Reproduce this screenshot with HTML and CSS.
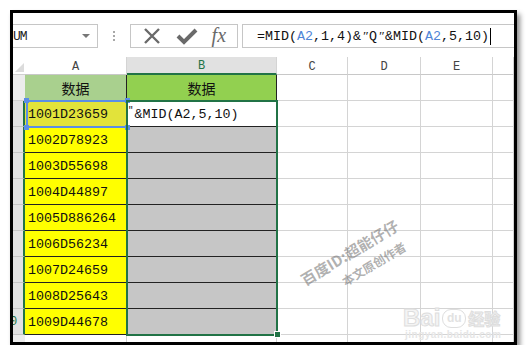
FILE: index.html
```html
<!DOCTYPE html>
<html lang="zh-CN">
<head>
  <meta charset="UTF-8">
  <title>MID 公式</title>
  <link rel="stylesheet" href="styles.css">
</head>
<body>
  <div class="frame">
    <!-- 编辑栏 -->
    <div class="formula-row">
      <div class="name-box">
        <span>UM</span>
        <span class="drop"></span>
      </div>
      <div class="grip"><i></i><i></i><i></i></div>
      <div class="fx-buttons">
        <svg width="20" height="18" viewBox="0 0 20 18"><path d="M3 2 L17 16 M17 2 L3 16" stroke="#6a6a6a" stroke-width="2.4" fill="none"/></svg>
        <svg width="22" height="18" viewBox="0 0 22 18"><path d="M2 9 L8 15 L20 3" stroke="#6a6a6a" stroke-width="4" fill="none"/></svg>
        <span class="fx">fx</span>
      </div>
      <div class="formula-box">=MID(<span class="ref">A2</span>,1,4)&amp;<span class="dq">″</span>Q<span class="dq">″</span>&amp;MID(<span class="ref">A2</span>,5,10)<span class="cursor"></span></div>
    </div>

    <!-- 表格区 -->
    <div class="sheet">
      <div class="row head-row">
        <div class="rh corner"><span class="tri"></span></div>
        <div class="cell ca ch">A</div>
        <div class="cell cb ch sel-col">B</div>
        <div class="cell cc ch">C</div>
        <div class="cell cd ch">D</div>
        <div class="cell ce ch">E</div>
        <div class="cell cf ch"></div>
      </div>
      <div class="row">
        <div class="rh"></div>
        <div class="cell ca title-a">数据</div>
        <div class="cell cb title-b">数据</div>
        <div class="cell cc"></div><div class="cell cd"></div><div class="cell ce"></div><div class="cell cf"></div>
      </div>
      <div class="row">
        <div class="rh sel-row"></div>
        <div class="cell ca data active">1001D23659</div>
        <div class="cell cb edit"><span class="q">″</span>&amp;MID(A2,5,10)</div>
        <div class="cell cc"></div><div class="cell cd"></div><div class="cell ce"></div><div class="cell cf"></div>
      </div>
      <div class="row">
        <div class="rh sel-row"></div>
        <div class="cell ca data">1002D78923</div>
        <div class="cell cb grey"></div>
        <div class="cell cc"></div><div class="cell cd"></div><div class="cell ce"></div><div class="cell cf"></div>
      </div>
      <div class="row">
        <div class="rh sel-row"></div>
        <div class="cell ca data">1003D55698</div>
        <div class="cell cb grey"></div>
        <div class="cell cc"></div><div class="cell cd"></div><div class="cell ce"></div><div class="cell cf"></div>
      </div>
      <div class="row">
        <div class="rh sel-row"></div>
        <div class="cell ca data">1004D44897</div>
        <div class="cell cb grey"></div>
        <div class="cell cc"></div><div class="cell cd"></div><div class="cell ce"></div><div class="cell cf"></div>
      </div>
      <div class="row">
        <div class="rh sel-row"></div>
        <div class="cell ca data">1005D886264</div>
        <div class="cell cb grey"></div>
        <div class="cell cc"></div><div class="cell cd"></div><div class="cell ce"></div><div class="cell cf"></div>
      </div>
      <div class="row">
        <div class="rh sel-row"></div>
        <div class="cell ca data">1006D56234</div>
        <div class="cell cb grey"></div>
        <div class="cell cc"></div><div class="cell cd"></div><div class="cell ce"></div><div class="cell cf"></div>
      </div>
      <div class="row">
        <div class="rh sel-row"></div>
        <div class="cell ca data">1007D24659</div>
        <div class="cell cb grey"></div>
        <div class="cell cc"></div><div class="cell cd"></div><div class="cell ce"></div><div class="cell cf"></div>
      </div>
      <div class="row">
        <div class="rh sel-row"></div>
        <div class="cell ca data">1008D25643</div>
        <div class="cell cb grey"></div>
        <div class="cell cc"></div><div class="cell cd"></div><div class="cell ce"></div><div class="cell cf"></div>
      </div>
      <div class="row">
        <div class="rh sel-row"><span class="num">0</span></div>
        <div class="cell ca data">1009D44678</div>
        <div class="cell cb grey"></div>
        <div class="cell cc"></div><div class="cell cd"></div><div class="cell ce"></div><div class="cell cf"></div>
      </div>
      <div class="row last-row">
        <div class="rh"></div>
        <div class="cell ca"></div><div class="cell cb"></div>
        <div class="cell cc"></div><div class="cell cd"></div><div class="cell ce"></div><div class="cell cf"></div>
      </div>

      <!-- 选区和引用框 -->
      <div class="ref-box">
        <i class="h tl"></i><i class="h tr"></i><i class="h bl"></i><i class="h br"></i>
      </div>
      <div class="selection"></div>
      <div class="fill-handle"></div>

      <!-- 水印 -->
      <div class="watermark">
        <span>百度ID:超能仔仔</span>
        <span class="sub">本文原创作者</span>
      </div>
      <div class="baidu">
        <div class="logo">
          <span class="bai">Bai</span>
          <span class="du">du</span>
          <span class="jy">经验</span>
        </div>
        <div class="url">jingyan.baidu.com</div>
      </div>
    </div>
  </div>
</body>
</html>
```

FILE: styles.css
```css
body {
  margin: 0;
  background: #fff;
  font-family: 'Liberation Mono', 'Noto Sans CJK SC', monospace;
}
.frame {
  margin: 10px 0 0 10px;
  width: 507px;
  height: 335px;
  box-sizing: border-box;
  border: 3px solid #000;
  box-shadow: 3px 4px 5px rgba(0,0,0,0.45);
  overflow: hidden;
  background: #fff;
}

/* 编辑栏 */
.formula-row {
  margin-top: 11px;
  height: 24px;
  display: flex;
  align-items: stretch;
}
.name-box {
  width: 85px;
  box-sizing: border-box;
  border: 1px solid #c6c6c6;
  border-left: none;
  display: flex;
  align-items: center;
  justify-content: space-between;
  padding-right: 7px;
  font-size: 13px;
  color: #222;
  letter-spacing: -1px;
}
.drop {
  width: 0; height: 0;
  border-left: 4px solid transparent;
  border-right: 4px solid transparent;
  border-top: 4px solid #777;
}
.grip {
  width: 32px;
  display: flex;
  flex-direction: column;
  align-items: center;
  justify-content: center;
  gap: 2px;
}
.grip i {
  width: 2px; height: 2px;
  background: #a8a8a8;
}
.fx-buttons {
  width: 108px;
  box-sizing: border-box;
  border: 1px solid #c6c6c6;
  display: flex;
  align-items: center;
  justify-content: space-around;
  padding: 0 4px;
}
.fx {
  font-family: 'Liberation Serif', serif;
  font-style: italic;
  font-size: 20px;
  color: #6a6a6a;
  line-height: 1;
  margin-top: -2px;
}
.formula-box {
  flex: 1;
  margin-left: 4px;
  box-sizing: border-box;
  border: 1px solid #c6c6c6;
  border-right: none;
  display: flex;
  align-items: center;
  padding-left: 14px;
  font-size: 13.33px;
  color: #111;
  white-space: pre;
}
.ref { color: #4f86d6; }
.dq {
  display: inline-block;
  width: 8px;
  font-family: 'Liberation Serif', serif;
  font-style: italic;
  text-align: center;
}
.cursor {
  width: 1px;
  height: 17px;
  background: #000;
  margin-left: 1px;
}

/* 表格 */
.sheet {
  position: relative;
  margin-top: 9px;
}
.row {
  display: flex;
  height: 26px;
}
.head-row { height: 18px; }
.last-row { height: 8px; }
.rh {
  width: 12px;
  box-sizing: border-box;
  background: #ececec;
  border-bottom: 1px solid #d0d0d0;
  overflow: hidden;
  font-size: 12px;
  color: #217346;
}
.rh.sel-row {
  background: #e1e1e1;
  border-right: 2px solid #217346;
  border-bottom-color: #c4c4c4;
}
.num {
  display: block;
  margin-left: -3px;
  margin-top: 6px;
}
.corner {
  background: #fff;
  border-bottom: 1px solid #d0d0d0;
  position: relative;
}
.tri {
  position: absolute;
  right: 1px;
  bottom: 2px;
  width: 0; height: 0;
  border-left: 9px solid transparent;
  border-bottom: 9px solid #dcdcdc;
}
.cell {
  box-sizing: border-box;
  border-right: 1px solid #d4d4d4;
  border-bottom: 1px solid #d4d4d4;
  font-size: 13.33px;
  color: #111;
  display: flex;
  align-items: center;
  white-space: nowrap;
  overflow: hidden;
}
.ca { width: 102px; }
.cb { width: 150px; }
.cc { width: 71px; }
.cd { width: 73px; }
.ce { width: 72px; }
.cf { flex: 1; }

.ch {
  justify-content: center;
  font-size: 12px;
  color: #444;
  background: #fff;
  border-bottom-color: #c8c8c8;
  padding-top: 2px;
}
.ch.sel-col {
  background: #e1e1e1;
  color: #217346;
  border-bottom: 2px solid #217346;
}
.title-a, .title-b {
  justify-content: center;
  font-family: 'Noto Sans CJK SC', sans-serif;
  font-size: 14px;
  color: #111;
  border-right-color: #222;
  border-bottom-color: #222;
}
.title-a { background: #a9d08e; }
.title-b { background: #92d050; }
.data {
  background: #ffff00;
  padding-left: 3px;
  padding-top: 2px;
  border-right-color: #222;
  border-bottom-color: #222;
}
.data.active { background: #e2e33a; }
.grey {
  background: #c6c6c6;
  border-right-color: #222;
  border-bottom-color: #222;
}
.edit {
  background: #fff;
  padding-left: 1px;
  padding-top: 2px;
  border-right-color: #222;
  border-bottom-color: #222;
}
.q {
  font-size: 9px;
  margin-top: -8px;
  margin-right: 1px;
}

/* 选区 */
.selection {
  position: absolute;
  left: 113px;
  top: 43px;
  width: 152px;
  height: 236px;
  box-sizing: border-box;
  border: 2px solid #217346;
}
.fill-handle {
  position: absolute;
  left: 261px;
  top: 274px;
  width: 5px;
  height: 5px;
  background: #217346;
  border: 1px solid #fff;
}
.ref-box {
  position: absolute;
  left: 13px;
  top: 43px;
  width: 102px;
  height: 28px;
  box-sizing: border-box;
  border: 2px solid #5b8ee6;
}
.h {
  position: absolute;
  width: 5px;
  height: 5px;
  background: #5b8ee6;
}
.tl { left: -4px; top: -4px; }
.tr { right: -4px; top: -4px; }
.bl { left: -4px; bottom: -4px; }
.br { right: -4px; bottom: -4px; }

/* 水印 */
.watermark {
  position: absolute;
  left: 287px;
  top: 185px;
  display: flex;
  flex-direction: column;
  align-items: center;
  gap: 4px;
  transform: rotate(-31deg);
  font-family: 'Noto Sans CJK SC', sans-serif;
  font-weight: bold;
  font-size: 15px;
  line-height: 18px;
  color: rgba(110,110,110,0.55);
  white-space: nowrap;
}
.watermark .sub {
  font-size: 12px;
  margin-left: 30px;
}
.baidu {
  position: absolute;
  left: 390px;
  top: 250px;
  width: max-content;
  white-space: nowrap;
  display: flex;
  flex-direction: column;
  align-items: flex-start;
  gap: 1px;
}
.logo {
  display: flex;
  align-items: center;
  gap: 2px;
  height: 22px;
  font-family: 'Liberation Sans', sans-serif;
}
.bai {
  font-size: 24px;
  line-height: 22px;
  font-weight: bold;
  color: #f4f4f4;
  -webkit-text-stroke: 1px #dedede;
}
.du {
  font-size: 12px;
  font-weight: bold;
  width: 22px;
  height: 17px;
  border-radius: 9px;
  border: 1px solid #dedede;
  display: flex;
  align-items: center;
  justify-content: center;
  color: #e2e2e2;
}
.jy {
  font-family: 'Noto Sans CJK SC', sans-serif;
  font-size: 16px;
  line-height: 20px;
  font-weight: bold;
  color: #f1f1f1;
  -webkit-text-stroke: 1px #dedede;
}
.url {
  font-family: 'Liberation Sans', sans-serif;
  font-size: 10px;
  line-height: 10px;
  font-weight: bold;
  color: #e6e6e6;
  margin-left: 2px;
  letter-spacing: 0.5px;
}
```
